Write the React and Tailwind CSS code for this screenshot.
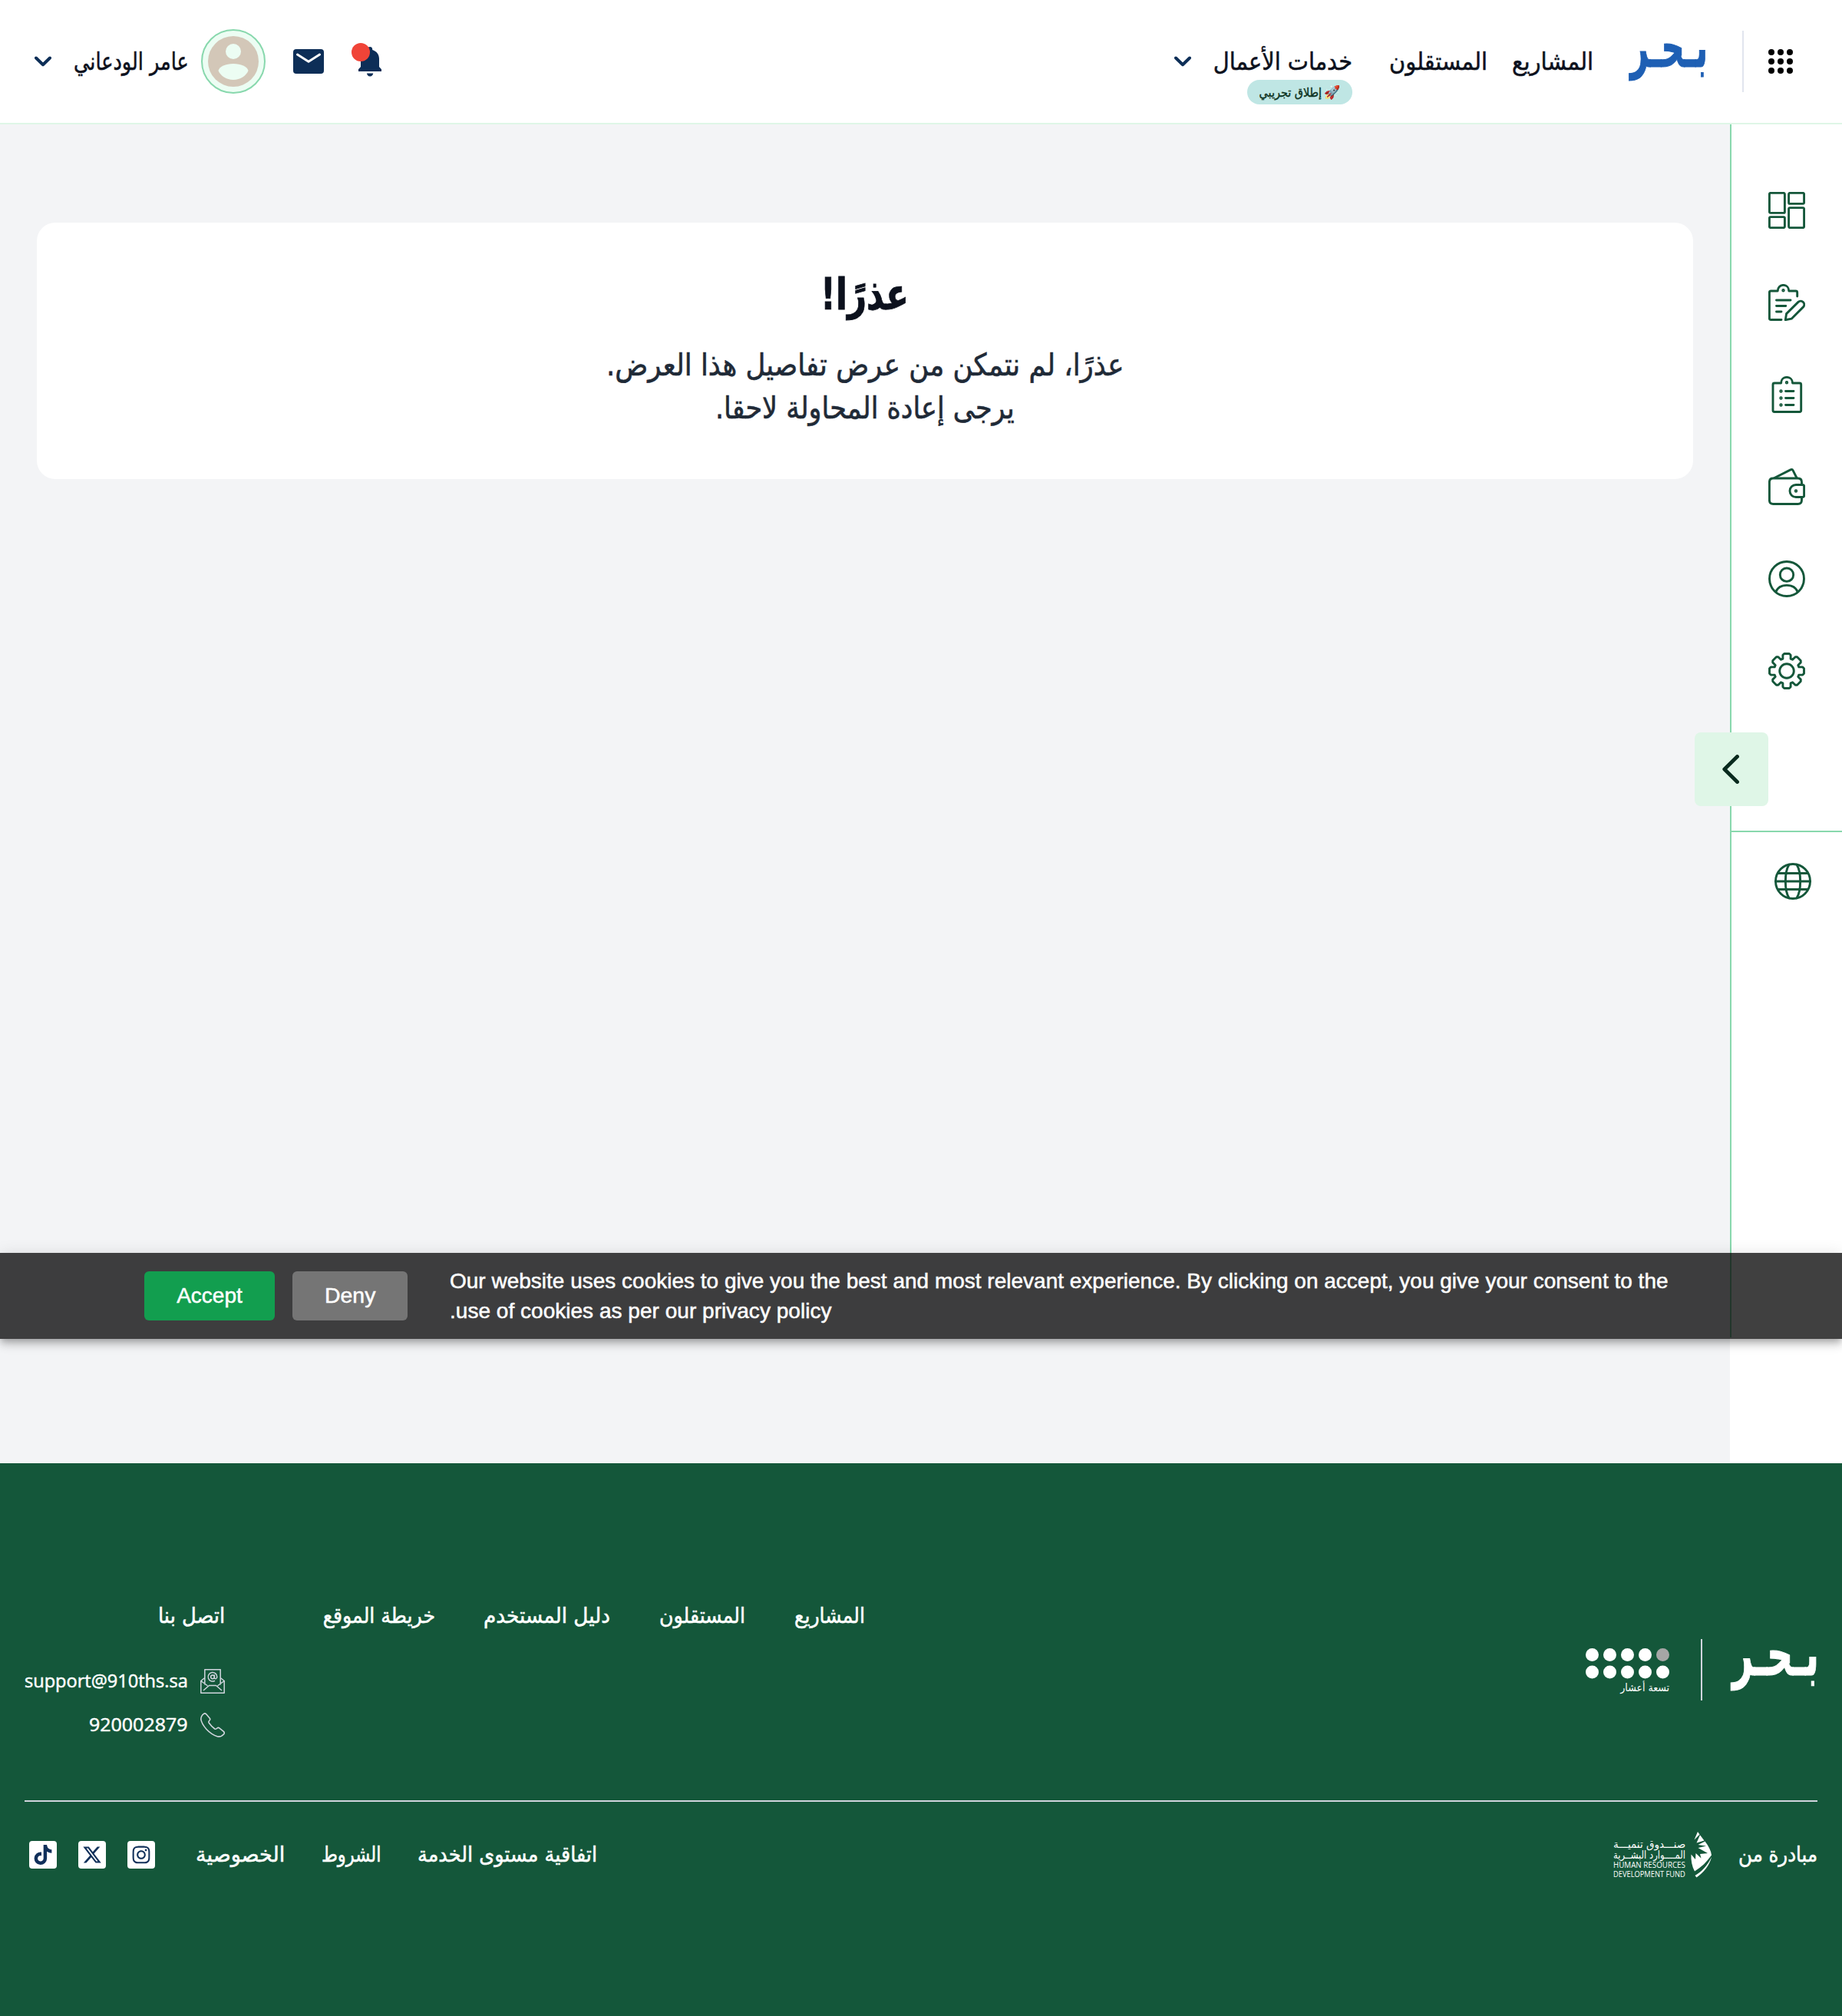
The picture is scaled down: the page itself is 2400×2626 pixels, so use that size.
import React, { useLayoutEffect, useRef, useState } from "react";
import { FaTiktok, FaInstagram, FaXTwitter } from "react-icons/fa6";

/* One line of text, stretched or condensed to the width of its box. */
function Fit({ className = "", children, dir = "rtl" }) {
  const box = useRef(null);
  const text = useRef(null);
  const [scale, setScale] = useState(1);
  useLayoutEffect(() => {
    setScale(box.current.offsetWidth / text.current.offsetWidth);
  }, []);
  return (
    <span ref={box} dir={dir} className={"block shrink-0 whitespace-nowrap " + className}>
      <span
        ref={text}
        className={"inline-block " + (dir === "rtl" ? "origin-right" : "origin-left")}
        style={{ transform: `scaleX(${scale})` }}
      >
        {children}
      </span>
    </span>
  );
}

function Chevron() {
  return (
    <svg className="h-[14px] w-[22px] shrink-0" viewBox="0 0 22 14" fill="none" stroke="#0d2e57" strokeWidth="4" strokeLinecap="round" strokeLinejoin="round">
      <path d="M2 2.5 11 11.2 20 2.5" />
    </svg>
  );
}

function Icon({ children }) {
  return (
    <svg className="size-12 shrink-0" viewBox="0 0 48 48" fill="none" stroke="#14573a" strokeWidth="2.9" strokeLinecap="round" strokeLinejoin="round">
      {children}
    </svg>
  );
}

const gearPath = (() => {
  const tooth = [[-5.1, -15.8], [-5.1, -20.8], [-3.3, -22.5], [3.3, -22.5], [5.1, -20.8], [5.1, -15.8]];
  const pts = [];
  for (let k = 0; k < 8; k++) {
    const c = Math.cos((k * Math.PI) / 4);
    const s = Math.sin((k * Math.PI) / 4);
    tooth.forEach(([x, y]) => pts.push(`${(24 + x * c - y * s).toFixed(2)} ${(24 + x * s + y * c).toFixed(2)}`));
  }
  return "M" + pts.join("L") + "Z";
})();

function Header() {
  return (
    <header className="flex h-[162px] items-center border-b-2 border-[#dff6e7] bg-white ps-16 pe-[45px]">
      <svg className="size-8 shrink-0" viewBox="0 0 32 32" fill="#000">
        {[4, 16, 28].map((y) => [4, 16, 28].map((x) => <circle key={x + "-" + y} cx={x} cy={y} r="4" />))}
      </svg>
      <div className="ms-8 h-20 w-[2px] shrink-0 bg-[#e1e5ee]" />
      <Fit className="ms-[45px] h-20 w-[101px] text-[74px] leading-[42px] font-bold text-[#1e5fb4] [-webkit-text-stroke:1px_#1e5fb4]">بـحـر</Fit>
      <nav className="flex items-center text-[32px] leading-[48px] text-[#0c111d] [-webkit-text-stroke:0.5px_#0c111d]">
        <Fit className="ms-[48px] w-[106px]">المشاريع</Fit>
        <Fit className="ms-[32px] w-[128px]">المستقلون</Fit>
        <div className="relative ms-[48px]">
          <Fit className="w-[181px]">خدمات الأعمال</Fit>
          <div className="absolute top-[48px] right-0 flex h-8 w-[137px] items-center rounded-full bg-[#bfe6e4] ps-4 text-[16px] leading-[31px] text-[#0d3322] [-webkit-text-stroke:0.4px_#0d3322]">
            <span className="w-5 shrink-0 text-[17px]">🚀</span>
            <Fit className="ms-1 w-[81px]">إطلاق تجريبي</Fit>
          </div>
        </div>
        <div className="ms-[29px] flex">
          <Chevron />
        </div>
      </nav>
      <div className="ms-auto flex items-center">
        <div className="relative flex h-10 w-[30px]">
          <svg className="h-10 w-[30px]" viewBox="0 0 30 40" fill="#0d2e57">
            <path d="M15 1c1.900 0 3.200 1.300 3.200 3.100v1C23.500 6.600 27 11 27 16.500V27l3 3.200V33H0v-2.800L3 27V16.500C3 11 6.500 6.600 11.800 5.100v-1C11.800 2.300 13.100 1 15 1ZM11 35.500h8.200c0 2.200-1.800 4-4.100 4s-4.100-1.800-4.100-4Z" />
          </svg>
          <span className="absolute top-[-4px] left-[-9px] size-6 rounded-full bg-[#f04438]" />
        </div>
        <svg className="ms-[45px] h-8 w-10" viewBox="0 0 40 32">
          <rect width="40" height="32" rx="4" fill="#0d2e57" />
          <path d="M5.500 7 20 16.200 34.500 7" fill="none" stroke="#fff" strokeWidth="3" strokeLinecap="round" strokeLinejoin="round" />
        </svg>
        <div className="ms-9 flex size-[84px] items-center justify-center rounded-full border-2 border-[#88d8ad] bg-[#ecfdf3]">
          <svg className="size-[66px]" viewBox="0 0 66 66">
            <circle cx="33" cy="33" r="33" fill="#d3c7b8" />
            <circle cx="33" cy="20" r="10" fill="#ecfdf3" />
            <path d="M13.500 45C15 39.500 23 36 33 36s18 3.500 19.500 9C50 51.500 42 57 33 57s-17-5.500-19.500-12Z" fill="#ecfdf3" />
          </svg>
        </div>
        <Fit className="ms-4 w-[150px] text-[32px] leading-[48px] text-[#0c111d] [-webkit-text-stroke:0.5px_#0c111d]">عامر الودعاني</Fit>
        <div className="ms-[29px] flex">
          <Chevron />
        </div>
      </div>
    </header>
  );
}

function Sidebar() {
  return (
    <aside className="relative w-[146px] shrink-0 bg-white">
      <div className="h-[1580px] border-e-2 border-[#88d8ad]">
        <div className="flex h-[922px] flex-col gap-[72px] border-b-2 border-[#88d8ad] ps-12 pt-[88px]">
          <Icon>
            <rect x="1.400" y="1.400" width="20" height="26" rx="1.500" />
            <rect x="26.600" y="1.400" width="20" height="14" rx="1.500" />
            <rect x="1.400" y="32.600" width="20" height="14" rx="1.500" />
            <rect x="26.600" y="20.600" width="20" height="26" rx="1.500" />
          </Icon>
          <Icon>
            <path d="M37.700 16V11q0-2-2-2H26.800C26.800 4.300 23.500 1.400 19.500 1.400S12.200 4.300 12.200 9H3.400q-2 0-2 2V44.500q0 2 2 2H17" />
            <circle cx="19.500" cy="8.300" r="1.300" strokeWidth="1.800" />
            <path d="M10.500 21H29M10.500 28.500H22.800M10.500 36H17" />
            <path d="M22.300 46.700 23.600 38.600 39 23.400a4.600 4.600 0 0 1 6.500 6.500L30.200 45.200Z" />
          </Icon>
          <Icon>
            <path d="M31.600 9H40.700q2 0 2 2V44.500q0 2-2 2H8q-2 0-2-2V11q0-2 2-2H16.600C16.600 4.300 19.800 1.400 24 1.400S31.600 4.300 31.600 9Z" />
            <circle cx="24" cy="8.300" r="1.300" strokeWidth="1.800" />
            <path d="M22.500 19.500H33M22.500 28.500H33M22.500 37.500H33" />
            {[19.5, 28.5, 37.5].map((y) => (
              <circle key={y} cx="16.500" cy={y} r="1.300" strokeWidth="1.800" />
            ))}
          </Icon>
          <Icon>
            <path d="M43.500 21V18q0-5-5-5H6.400q-5 0-5 5V41.500q0 5 5 5H38.500q5 0 5-5V38" />
            <path d="M46.600 23.500q0-2-2-2H36a8 8 0 0 0 0 16h8.600q2 0 2-2Z" />
            <circle cx="36" cy="29.500" r="1.300" strokeWidth="1.800" />
            <path d="M8 12.500 29 1.900q2.200-1 3.300 1.200L37 12.500" />
          </Icon>
          <Icon>
            <circle cx="24" cy="24" r="22.500" />
            <circle cx="24" cy="18.700" r="8.700" />
            <path d="M9.800 41C12 35.500 17.500 32.400 24 32.400S36 35.500 38.200 41" />
          </Icon>
          <Icon>
            <path d={gearPath} />
            <circle cx="24" cy="24" r="9.300" />
          </Icon>
        </div>
        <div className="ps-10 pt-10">
          <Icon>
            <circle cx="24" cy="24" r="22.500" />
            <path d="M1.400 24H46.600M5 13.500H43M5 34.500H43" />
            <path d="M19 2.200C12.800 12 12.800 36 19 45.800M29 2.200C35.200 12 35.200 36 29 45.800" />
          </Icon>
        </div>
      </div>
      <button className="absolute top-[792px] left-[-46px] flex size-24 items-center justify-center rounded-lg bg-[#dff6e7]">
        <svg className="mr-[3px] h-[38px] w-[22px]" viewBox="0 0 22 38" fill="none" stroke="#092a1e" strokeWidth="4.800" strokeLinecap="round" strokeLinejoin="round">
          <path d="M19.500 2.500 2.800 19 19.500 35.500" />
        </svg>
      </button>
    </aside>
  );
}

function CookieBar() {
  return (
    <div
      dir="ltr"
      className="absolute top-[1632px] left-0 flex h-28 w-full items-center bg-black/75 ps-[188px] font-['Liberation_Sans',sans-serif] text-[28px] text-white shadow-[0_4px_8px_-2px_rgba(0,0,0,0.2),0_8px_10px_0_rgba(0,0,0,0.14),0_2px_20px_0_rgba(0,0,0,0.12)] [-webkit-text-stroke:0.5px_#fff]"
    >
      <button className="flex h-16 w-[170px] items-center justify-center rounded-md bg-[#129e4f]">
        <Fit dir="ltr" className="w-[86px]">Accept</Fit>
      </button>
      <button className="ms-[23px] flex h-16 w-[150px] items-center justify-center rounded-md bg-[#757575]">
        <Fit dir="ltr" className="w-[66px]">Deny</Fit>
      </button>
      <div className="ms-[55px] leading-[39px]">
        <Fit dir="ltr" className="w-[1588px]">
          Our website uses cookies to give you the best and most relevant experience. By clicking on accept, you give your consent to the
        </Fit>
        <Fit dir="ltr" className="w-[497px]">.use of cookies as per our privacy policy</Fit>
      </div>
    </div>
  );
}

function Hrdf() {
  return (
    <div className="ms-[34px] flex h-[60px]">
      <svg className="h-[60px] w-[28px]" viewBox="0 0 28 60" fill="#fff">
        <path d="M9 0 11.500 3.500 4.500 10.500ZM12 4.300 17.500 11.500 7.500 14.500ZM18.500 12.500C23.500 19 26.500 25 27 30.500 21 39 14 46 5 51.500 1.500 45 0 37 .5 29.500L6 36 6.500 28 13.500 34.500 12 29 22 28 9.500 21 20 18.500 9.500 17Z" />
        <path d="M27 33C24.500 44 16.500 53 7.500 59.500L5.500 57C14 52.500 22 43.500 27 33Z" />
      </svg>
      <div className="ms-[7px] pt-[9px] text-[14px] text-white">
        <Fit className="h-[14px] w-[94px] leading-[14px]">صنـــدوق تنميـــة</Fit>
        <Fit className="h-[14px] w-[94px] leading-[14px]">المــــوارد البشــرية</Fit>
        <Fit dir="ltr" className="h-3 w-[94px] font-['Open_Sans',sans-serif] text-[10px] leading-[13px]">HUMAN RESOURCES</Fit>
        <Fit dir="ltr" className="h-3 w-[94px] font-['Open_Sans',sans-serif] text-[10px] leading-[13px]">DEVELOPMENT FUND</Fit>
      </div>
    </div>
  );
}

const socials = [FaInstagram, FaXTwitter, FaTiktok];

function Footer() {
  return (
    <footer className="h-[720px] bg-[#14573a] px-8 pt-[178px] text-[28px] leading-[42px] text-white">
      <div className="flex h-[263px] border-b-2 border-[#d0d5dd]">
        <div className="mt-[51px] flex h-20 items-center">
          <Fit className="-ms-[2px] h-20 w-[113px] text-[80px] leading-[40px] font-bold [-webkit-text-stroke:1px_#fff]">بـحـر</Fit>
          <div className="ms-[39px] h-20 w-[2px] bg-[#d0d5dd]" />
          <div className="ms-[41px] pt-[3px]">
            <svg className="h-10 w-[109px]" viewBox="0 0 109 40" fill="#fff">
              {[8.5, 31.5, 54.5, 77.500, 100.5].map((x) => (
                <g key={x}>
                  <circle cx={x} cy="8.500" r="8.500" fill={x === 100.5 ? "#a6a6a6" : "#fff"} />
                  <circle cx={x} cy="31" r="8.500" />
                </g>
              ))}
            </svg>
            <Fit className="mt-[2px] w-[64px] text-[14px] leading-[18px]">تسعة أعشار</Fit>
          </div>
        </div>
        <div className="ms-auto flex [-webkit-text-stroke:0.5px_#fff]">
          <Fit className="h-[42px] w-[92px]">المشاريع</Fit>
          <Fit className="ms-16 h-[42px] w-[112px]">المستقلون</Fit>
          <Fit className="ms-16 h-[42px] w-[165px]">دليل المستخدم</Fit>
          <Fit className="ms-[63px] h-[42px] w-[146px]">خريطة الموقع</Fit>
        </div>
        <div className="ms-[128px] w-[261px] [-webkit-text-stroke:0.5px_#fff]">
          <Fit className="h-[42px] w-[87px]">اتصل بنا</Fit>
          <div className="mt-[48px] flex h-8 items-center font-['Open_Sans',sans-serif] text-[24px]">
            <svg className="size-8" viewBox="0 0 32 32" fill="none" stroke="#d0d5dd" strokeWidth="1.500" strokeLinejoin="round" strokeLinecap="round">
              <path d="M5.800 20V.8H26.200V20M5.800 11.500.8 15.500V31.200H31.200V15.500L26.200 11.500M.8 15.500 9 21.500M31.200 15.500 23 21.500M4.500 27.500 11.500 21.500H20.500L27.500 27.500" />
              <circle cx="16" cy="10.300" r="2.400" />
              <path d="M18.400 8V11.200q0 1.600 1.700 1.600 1.700-.3 1.700-2.500A5.800 5.800 0 1 0 18.500 15.500" />
            </svg>
            <Fit dir="ltr" className="mr-4 w-[213px] pb-[2px] leading-[40px]">support@910ths.sa</Fit>
          </div>
          <div className="mt-[25px] flex h-8 items-center font-['Open_Sans',sans-serif] text-[24px]">
            <svg className="size-8" viewBox="0 0 32 32" fill="none" stroke="#d0d5dd" strokeWidth="1.600" strokeLinejoin="round">
              <path d="M4.500 1.300Q6 .2 7.700 1.800L12.300 7.200Q13.300 8.600 12 10 10.200 11.600 11.300 13.300 14.500 18 18.800 21Q20.500 21.700 22 20 23.300 18.800 24.700 19.800L30.300 24.400Q32 26 30.700 27.700 27.500 31.600 22.500 31 14.500 28.500 8 21.500 1.500 14 .8 8.500.8 4 4.500 1.300Z" />
            </svg>
            <Fit dir="ltr" className="mr-4 w-[129px] pb-[2px] leading-[40px]">920002879</Fit>
          </div>
        </div>
      </div>
      <div className="mt-[39px] flex h-[60px] items-center">
        <Fit className="w-[103px] [-webkit-text-stroke:0.5px_#fff]">مبادرة من</Fit>
        <Hrdf />
        <div className="ms-auto flex items-center pe-[6px] [-webkit-text-stroke:0.5px_#fff]">
          <Fit className="w-[234px]">اتفاقية مستوى الخدمة</Fit>
          <Fit className="ms-[47px] w-[78px]">الشروط</Fit>
          <Fit className="ms-[48px] w-[116px]">الخصوصية</Fit>
          <div className="ms-[53px] flex gap-7">
            {socials.map((Social, i) => (
              <span key={i} className="flex size-9 items-center justify-center rounded bg-white text-[#10305a]">
                <Social size={26} />
              </span>
            ))}
          </div>
        </div>
      </div>
    </footer>
  );
}

export default function App() {
  return (
    <div dir="rtl" className="relative h-[2626px] w-[2400px] overflow-hidden bg-white font-['DejaVu_Sans_Condensed','DejaVu_Sans',sans-serif]">
      <Header />
      <div className="flex h-[1744px]">
        <Sidebar />
        <main className="grow bg-[#f3f4f6] ps-12 pe-12 pt-32">
          <section className="flex h-[334px] flex-col items-center rounded-3xl bg-white pt-[56px]">
            <Fit className="h-[84px] w-[115px] text-[57px] leading-[74px] font-bold text-[#0c111d] [-webkit-text-stroke:0.8px_#0c111d]">عذرًا!</Fit>
            <div className="mt-[17px] flex flex-col items-center text-[40px] leading-[56px] text-[#1f2a37] [-webkit-text-stroke:0.6px_#1f2a37]">
              <Fit className="w-[675px]">عذرًا، لم نتمكن من عرض تفاصيل هذا العرض.</Fit>
              <Fit className="w-[390px]">يرجى إعادة المحاولة لاحقا.</Fit>
            </div>
          </section>
        </main>
      </div>
      <Footer />
      <CookieBar />
    </div>
  );
}
